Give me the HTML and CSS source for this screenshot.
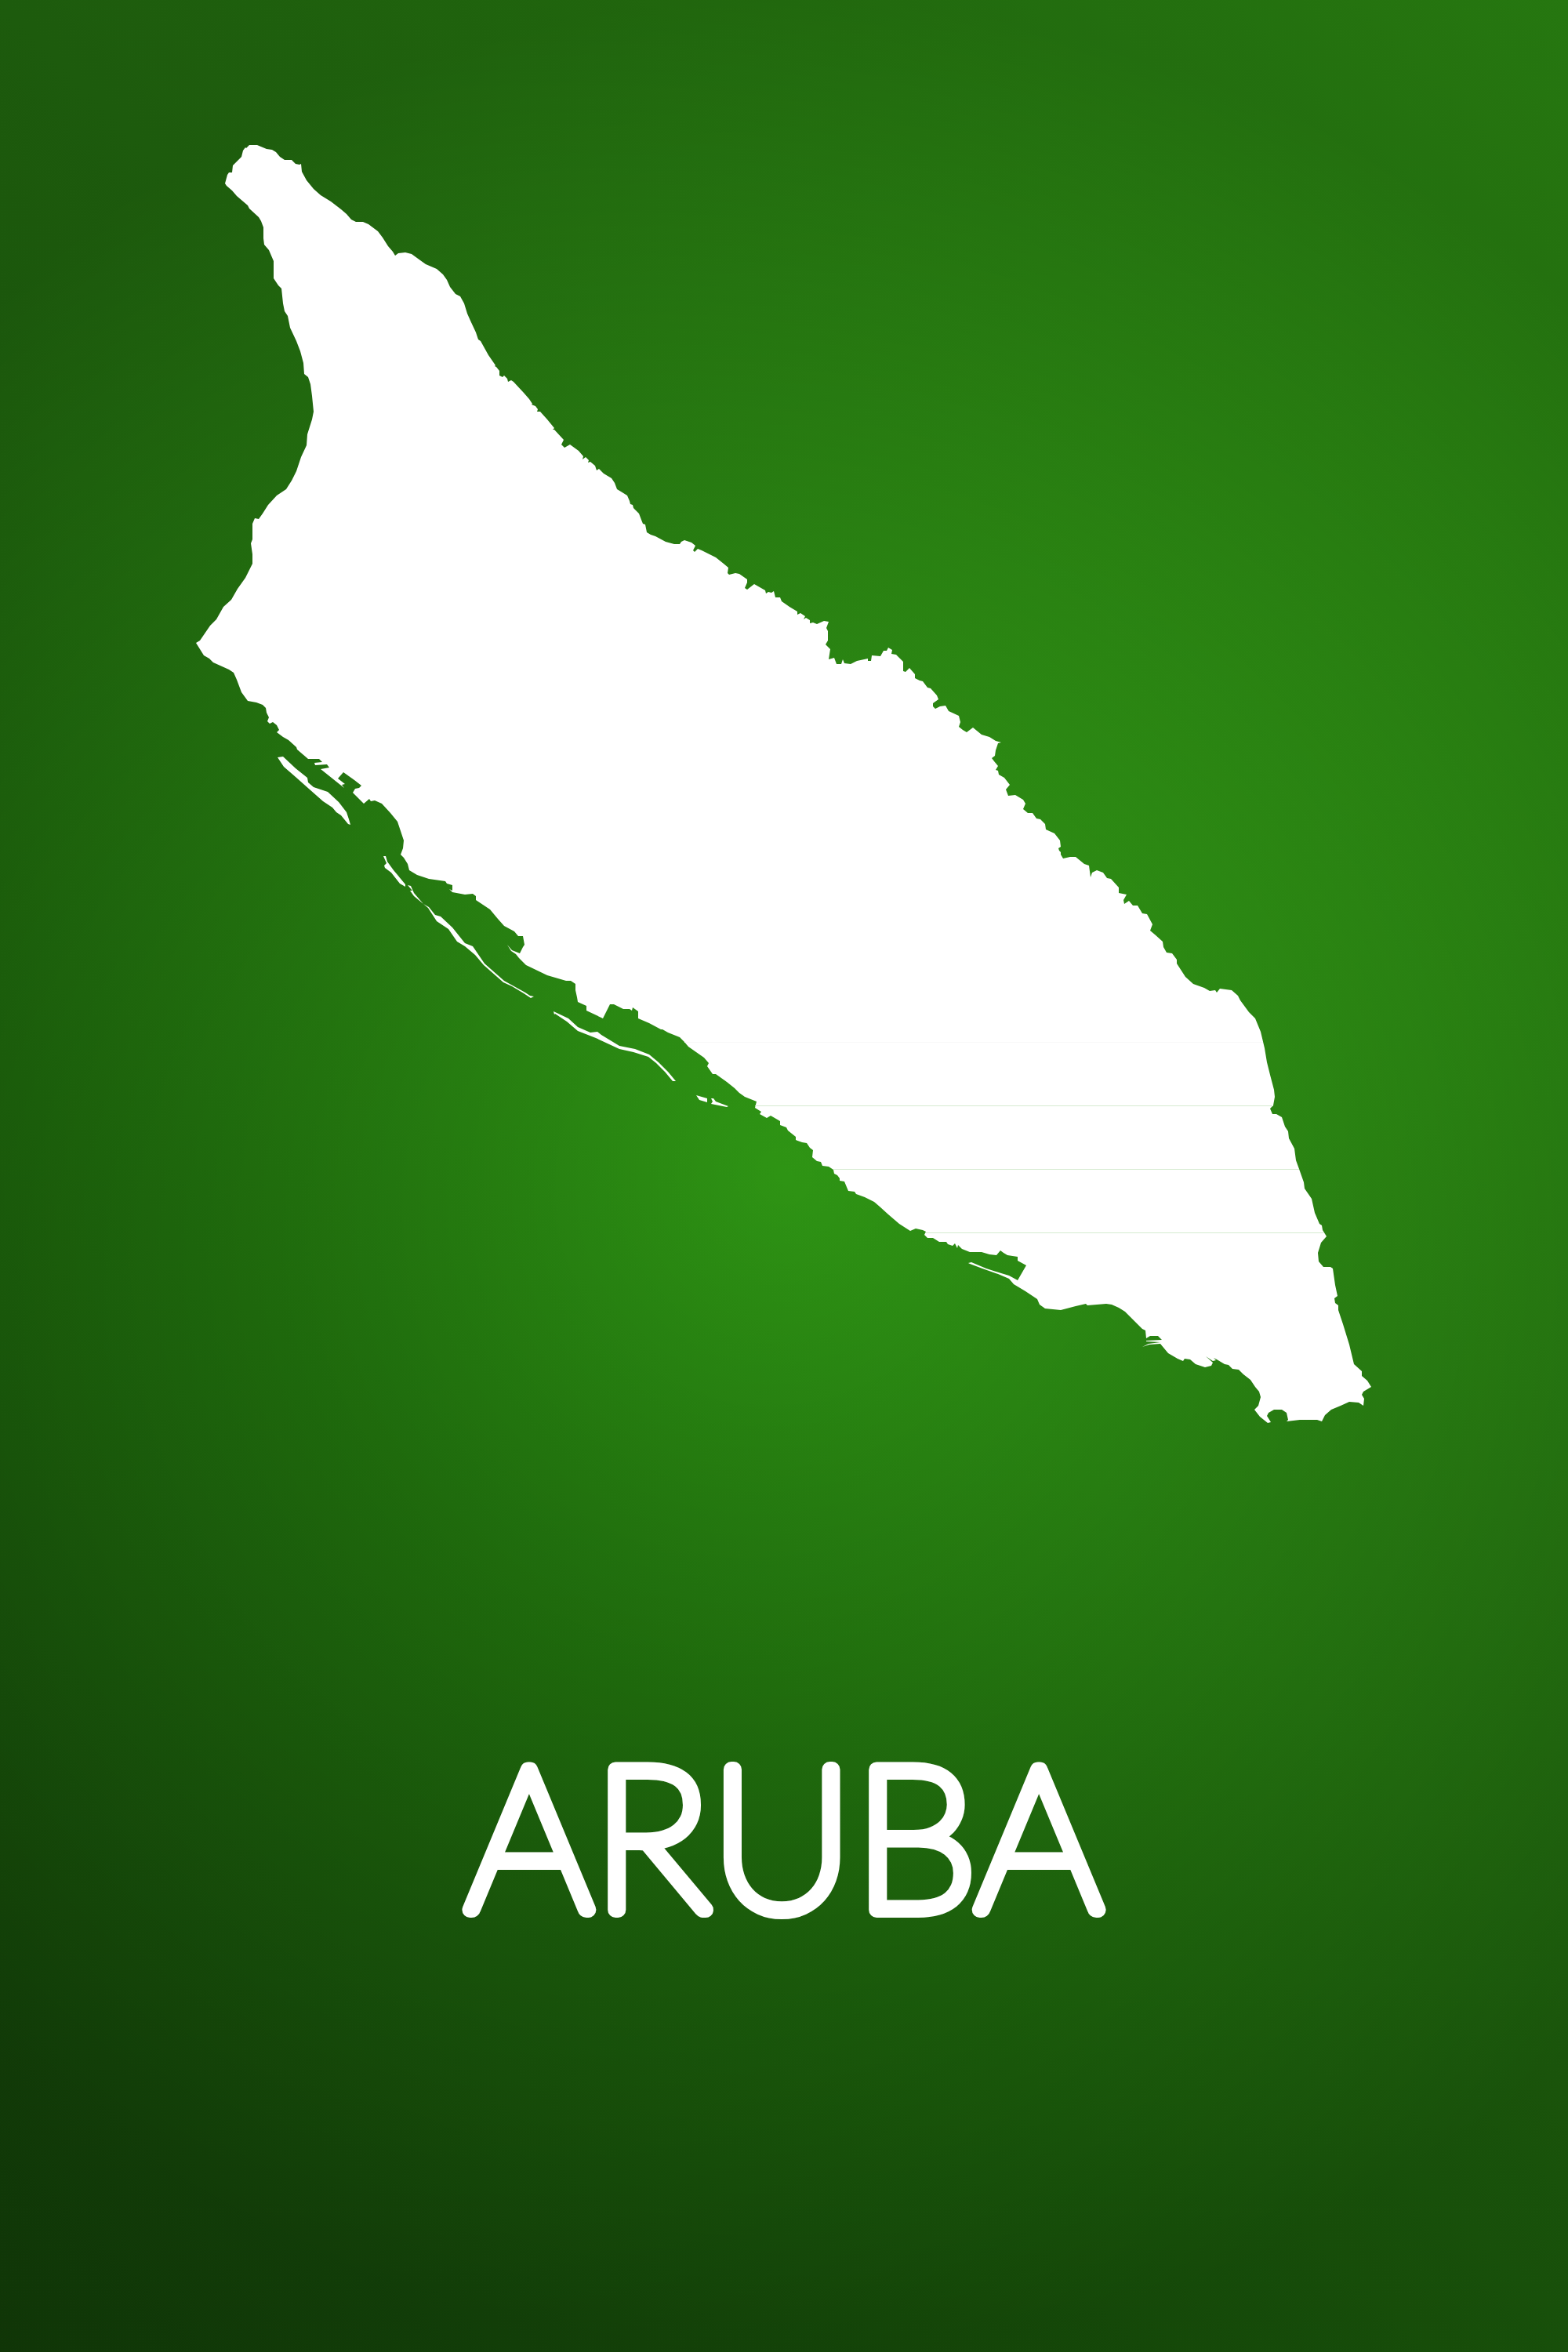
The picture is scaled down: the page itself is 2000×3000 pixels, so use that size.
FILE: index.html
```html
<!DOCTYPE html>
<html lang="en">
<head>
<meta charset="utf-8">
<meta name="viewport" content="width=device-width, initial-scale=1">
<title>Aruba</title>
<link rel="stylesheet" href="styles.css">
</head>
<body>
<main class="poster">
  <svg class="map" viewBox="250 180 1500 1640" role="img" aria-label="Map of Aruba">
    <g class="land">
      <path d="M287 234L290 223 292 220 296 220 297 211 308 200 310 192 313 188 314 189 318 185 328 185 340 190 347 191 352 194 357 200 363 204 372 204 377 209 382 210 384 209 385 219 391 230 400 241 409 249 422 257 435 267 442 273 448 280 454 283 463 283 470 286 482 295 488 303 495 314 501 321 504 326 508 323 517 322 525 324 536 332 543 337 557 343 565 350 570 357 574 366 581 375 587 378 592 387 596 400 600 409 607 424 610 433 613 435 623 453 632 466 631 467 633 468 637 473 637 479 641 481 643 479 647 483 648 487 652 485 655 487 668 501 675 509 679 515 678 516 683 518 686 522 685 525 689 525 698 535 707 546 705 548 707 548 719 561 716 567 720 571 727 567 738 575 744 582 743 586 747 583 751 587 750 590 753 589 759 594 761 600 764 598 770 604 780 610 784 616 787 624 792 627 800 632 803 639 804 643 807 644 808 648 815 655 818 663 820 668 823 669 825 679 830 682 836 684 849 691 860 694 867 694 869 691 873 689 882 692 887 696 884 702 886 704 890 700 895 702 913 711 923 719 929 724 928 731 930 733 938 731 943 732 953 739 953 743 950 750 953 752 962 745 976 753 977 757 980 755 984 756 987 754 989 762 995 762 997 767 1007 774 1017 780 1017 784 1021 782 1027 786 1025 790 1028 788 1033 791 1033 795 1037 794 1042 796 1051 792 1057 793 1054 801 1056 805 1056 817 1053 822 1059 828 1057 841 1064 839 1067 847 1073 847 1075 841 1077 846 1085 847 1093 843 1107 840 1107 843 1111 843 1112 836 1123 837 1127 830 1131 830 1133 826 1138 829 1137 834 1143 835 1148 840 1152 844 1152 856 1155 857 1160 852 1167 860 1167 865 1173 868 1177 869 1183 877 1187 878 1195 887 1197 892 1190 897 1190 901 1193 904 1199 901 1206 900 1210 907 1223 913 1225 921 1223 927 1228 931 1233 934 1241 928 1252 937 1262 940 1270 945 1277 947 1273 948 1270 957 1269 964 1265 967 1268 971 1273 977 1270 982 1273 983 1274 988 1281 992 1288 1001 1283 1007 1286 1015 1295 1014 1305 1020 1308 1025 1305 1032 1311 1037 1317 1037 1322 1044 1327 1045 1333 1051 1334 1058 1345 1063 1352 1072 1353 1080 1350 1082 1351 1085 1353 1087 1353 1090 1356 1095 1365 1093 1372 1093 1383 1102 1389 1104 1391 1119 1393 1113 1399 1110 1407 1113 1412 1120 1417 1121 1427 1132 1427 1139 1437 1141 1433 1148 1434 1153 1440 1149 1445 1155 1451 1155 1457 1165 1463 1166 1470 1179 1467 1187 1473 1192 1483 1201
      1484 1208 1488 1215 1495 1216 1501 1224 1501 1229 1512 1246 1522 1255 1536 1260 1543 1264 1550 1263 1552 1266 1556 1261 1571 1263 1579 1270 1582 1276 1593 1291 1601 1299 1608 1316 1613 1337 1616 1355 1620 1371 1625 1390 1626 1399 1624 1410 1620 1414 1623 1421 1628 1421 1635 1425 1639 1437 1643 1443 1644 1452 1651 1465 1653 1480 1657 1491 1663 1508 1664 1516 1673 1529 1677 1547 1683 1561 1686 1563 1687 1569 1692 1577 1685 1585 1681 1598 1682 1609 1688 1616 1697 1616 1700 1618 1703 1639 1706 1653 1702 1656 1703 1662 1707 1665 1707 1671 1713 1689 1721 1715 1727 1740 1737 1749 1737 1755 1744 1761 1749 1769 1739 1775 1737 1779 1740 1784 1739 1793 1733 1789 1721 1788 1710 1793 1698 1798 1690 1805 1686 1813 1680 1811 1658 1811 1641 1813 1643 1811 1641 1802 1635 1798 1625 1798 1618 1802 1616 1806 1621 1814 1617 1815 1607 1807 1600 1798 1605 1793 1608 1782 1606 1775 1601 1769 1595 1760 1586 1753 1580 1747 1572 1746 1567 1741 1562 1740 1552 1734 1548 1732 1551 1735 1547 1736 1538 1730 1547 1738 1545 1742 1537 1744 1525 1740 1518 1734 1511 1733 1509 1736 1502 1733 1490 1726 1480 1714 1466 1715 1457 1718 1465 1714 1480 1712 1462 1711 1462 1710 1482 1709 1477 1704 1467 1704 1462 1707 1461 1697 1457 1695 1442 1680 1435 1673 1427 1668 1418 1664 1411 1663 1387 1665 1385 1663 1372 1666 1353 1671 1333 1669 1326 1664 1323 1657 1308 1647
      1293 1638 1287 1631 1273 1625 1253 1618 1237 1612 1235 1611 1239 1610 1258 1618 1277 1624 1287 1627 1298 1633 1309 1614 1298 1608 1298 1603 1285 1601 1280 1598 1276 1595 1271 1601 1262 1600 1252 1597 1237 1597 1227 1593 1222 1588 1221 1592 1218 1586 1215 1589 1209 1587 1207 1584 1198 1584 1190 1579 1183 1579 1179 1575 1181 1571 1177 1569 1168 1567 1161 1570 1147 1561 1133 1549 1122 1539 1115 1533 1103 1527 1092 1523 1090 1520 1082 1519 1077 1507 1071 1506 1071 1503 1068 1499 1064 1497 1063 1492 1057 1488 1049 1487 1047 1482 1042 1481 1036 1476 1037 1467 1033 1464 1029 1458 1023 1457 1015 1454 1015 1450 1005 1442 1003 1438 995 1435 995 1430 983 1423 978 1426 969 1421 971 1418 963 1413 965 1405 950 1399 943 1394 937 1388 927 1380 913 1370 909 1370 902 1360 904 1356 898 1349 878 1335 873 1329 867 1323 852 1317 845 1313 843 1313 828 1305 814 1299 814 1290 807 1285 806 1289 803 1287 795 1287 783 1281 778 1281 769 1299 748 1289 748 1283 737 1278 736 1272 734 1263 734 1255 728 1251 722 1251 698 1244 671 1231 662 1222 658 1217 652 1213 647 1205 653 1212 663 1216 667 1208 669 1205 667 1194 661 1194 656 1188 643 1181 635 1172 625 1160 607 1148 607 1143 603 1140 593 1141 577 1138 573 1134 577 1136 577 1129 570 1127 568 1124 547 1121 532 1116 522 1110 520 1102 515 1094 511 1090 514 1082 515 1072 511 1060
      507 1048 498 1037 487 1025 478 1021 473 1022 471 1019 464 1025 450 1011 453 1006 458 1005 461 1002 452 995 438 985 431 993 440 1000 436 1001 439 1005 409 981 420 979 417 975 402 976 401 973 411 972 407 968 393 968 379 956 378 953 368 944 361 940 353 934 356 931 353 925 348 921 344 923 341 920 343 915 340 909 339 903 335 899 327 896 316 894 308 883 302 867 298 858 292 854 272 845 267 840 260 836 255 828 250 820 255 817 268 798 276 790 285 774 295 765 303 751 313 737 322 719 322 707 320 693 322 688 322 668 325 661 330 662 335 655 342 644 353 632 365 624 372 613 378 601 384 583 391 568 392 554 398 535 400 525 398 505 396 490 393 481 388 477 387 463 383 448 378 435 370 418 367 403 363 397 361 387 359 368 355 364 349 355 349 333 343 319 337 312 336 304 336 290 333 282 330 277 318 266 316 262 302 250 296 243 289 237Z"/>
      <path d="M354 966L361 965 377 980 392 992 393 998 400 1004 418 1010 432 1023 442 1036 445 1045 447 1052 444 1051 435 1040 429 1036 424 1030 412 1022 395 1007 377 991 362 978Z"/>
      <path d="M489 1092L492 1092 494 1099 502 1110 517 1128 517 1131 510 1127 499 1113 491 1107 490 1104 493 1101Z"/>
      <path d="M520 1129L524 1130 528 1139 540 1153 547 1157 555 1167 562 1169 577 1183 593 1203 603 1207 618 1229 643 1251 670 1266 676 1270 681 1271 677 1273 668 1267 653 1258 642 1253 617 1231 606 1218 593 1207 583 1201 572 1185 557 1175 546 1158 528 1143 523 1136 526 1136Z"/>
      <path d="M706 1290L725 1299 737 1310 753 1317 762 1316 767 1320 790 1334 810 1338 828 1345 840 1355 852 1367 862 1379 858 1379 848 1367 837 1356 827 1348 808 1342 790 1338 760 1324 737 1315 723 1303 708 1293 707 1294Z"/>
      <path d="M888 1397L902 1401 902 1406 892 1403Z"/>
      <path d="M907 1401L910 1401 913 1405 929 1411 927 1412 907 1408 909 1405Z"/>
    </g>
    <g class="seams">
      <path class="faint" d="M873 1329.500H1611"/>
      <path d="M963 1410.500H1624M1063 1491.500H1657M1181 1572.500H1688"/>
    </g>
  </svg>
  <h1 class="title">
    <svg class="lettering" viewBox="0 0 1000 320">
      <text class="name" x="500" y="256">ARUBA</text>
    </svg>
  </h1>
</main>
</body>
</html>
```
FILE: styles.css
```css
* {
  box-sizing: border-box;
}

body {
  margin: 0;
  color: #fff;
  font-family: Lato, "Open Sans", sans-serif;
}

.poster {
  display: flex;
  flex-direction: column;
  align-items: center;
  min-height: 100vh;
  padding: 9% 0;
  background:
    radial-gradient(circle farthest-side at center, rgba(0, 0, 0, 0), rgba(0, 0, 0, 0.42)),
    linear-gradient(45deg, #1b5c0c, #25800f 33%, #2e9414 50%, #329c16 60%, #39b318 80%, #41cd1b);
}

.map {
  display: block;
  width: 75%;
}

.land {
  fill: #fff;
}

.seams {
  fill: none;
  stroke: #d5ebd0;
  stroke-width: 1;
}

.seams .faint {
  stroke: #f8f9f8;
}

.title {
  width: 50%;
  margin: 18% 0 0;
}

.lettering {
  display: block;
  width: 100%;
  overflow: visible;
}

.name {
  fill: #fff;
  stroke: #fff;
  stroke-width: 20px;
  stroke-linejoin: round;
  font-size: 254px;
  font-weight: 100;
  text-anchor: middle;
}
```
